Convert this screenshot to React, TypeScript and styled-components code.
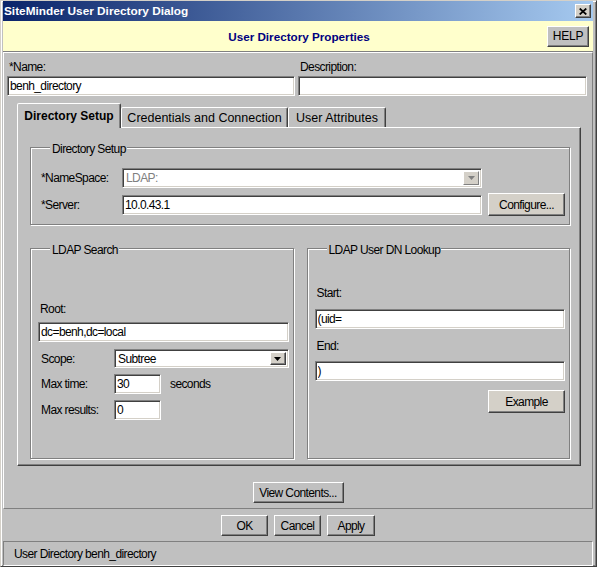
import React from "react";
import styled, { createGlobalStyle, css } from "styled-components";

const Global = createGlobalStyle`
  html, body { margin: 0; padding: 0; background: #c0c0c0; }
  *, *::before, *::after { box-sizing: border-box; }
  body { font-family: "Liberation Sans", Arial, sans-serif; color: #000; }
`;

const narrow = css`
  font-family: "Liberation Sans", Arial, sans-serif;
  font-size: 12px;
  letter-spacing: -0.6px;
  white-space: nowrap;
`;

const sunken = css`
  border: 1px solid;
  border-color: #808080 #fff #fff #808080;
  box-shadow: inset 1px 1px 0 #404040, inset -1px -1px 0 #d4d0c8;
`;

const raised = css`
  border: 1px solid;
  border-color: #fff #404040 #404040 #fff;
  box-shadow: inset -1px -1px 0 #808080;
`;

const Window = styled.div`
  width: 597px;
  height: 567px;
  background: #c0c0c0;
  border: 1px solid;
  border-color: #d4d0c8 #404040 #404040 #d4d0c8;
  box-shadow: inset 1px 1px 0 #fff, inset -1px -1px 0 #808080;
  padding: 0 3px 0 2px;
  display: flex;
  flex-direction: column;
`;

const TitleBar = styled.div`
  flex: none;
  height: 20px;
  display: flex;
  align-items: center;
  justify-content: space-between;
  padding: 0 2px 0 1px;
  background: linear-gradient(90deg, #0a246a 0%, #a6caf0 100%);
`;

const TitleText = styled.span`
  color: #fff;
  font-weight: bold;
  font-size: 11.8px;
`;

const CloseButton = styled.span`
  width: 16px;
  height: 14px;
  background: #d4d0c8;
  ${raised};
  display: flex;
  align-items: center;
  justify-content: center;
`;

const Header = styled.div`
  flex: none;
  height: 31px;
  background: #ffffcc;
  border-bottom: 1px solid #808080;
  display: grid;
  grid-template-columns: 1fr auto 1fr;
  align-items: center;
`;

const HeaderTitle = styled.span`
  color: #000080;
  font-weight: bold;
  font-size: 11.7px;
  padding-left: 2px;
`;

const Button = styled.button<{ $w: number; $h?: number; $light?: boolean }>`
  ${narrow};
  width: ${(p) => p.$w}px;
  height: ${(p) => p.$h ?? 21}px;
  margin: 0;
  padding: 0;
  color: #000;
  background: ${(p) => (p.$light ? "#d4d0c8" : "#c0c0c0")};
  ${raised};
  display: flex;
  align-items: center;
  justify-content: center;
  flex: none;
`;

const HelpButton = styled(Button)`
  font-size: 12px;
  letter-spacing: -0.2px;
  justify-self: end;
  margin-right: 4px;
`;

const MainPanel = styled.div`
  flex: none;
  height: 457px;
  border: 1px solid;
  border-color: #fff #808080 #808080 #fff;
  display: flex;
  flex-direction: column;
  padding: 6px 5px 0 3px;
`;

const NameRow = styled.div`
  display: grid;
  grid-template-columns: 288px 289px;
  column-gap: 3px;
`;

const FieldColumn = styled.div`
  display: flex;
  flex-direction: column;
`;

const FieldLabel = styled.label`
  ${narrow};
  display: block;
  line-height: 16px;
  height: 17px;
  padding-left: 2px;
`;

const TextInput = styled.input<{ $w?: number }>`
  ${narrow};
  display: block;
  width: ${(p) => (p.$w ? `${p.$w}px` : "100%")};
  height: 20px;
  margin: 0;
  padding: 0 2px;
  ${sunken};
  background: #fff;
  color: #000;
  outline: none;
`;

const TabsArea = styled.div`
  margin: 7px 6px 0 10px;
  display: flex;
  flex-direction: column;
`;

const TabStrip = styled.div`
  display: flex;
  align-items: flex-end;
`;

const Tab = styled.div<{ $active?: boolean; $w: number }>`
  position: relative;
  z-index: ${(p) => (p.$active ? 1 : 0)};
  width: ${(p) => p.$w}px;
  height: ${(p) => (p.$active ? 25 : 20)}px;
  margin-bottom: ${(p) => (p.$active ? -1 : 0)}px;
  background: #c0c0c0;
  border: 1px solid;
  border-bottom: none;
  border-color: #fff #404040 transparent #fff;
  border-radius: 2px 2px 0 0;
  box-shadow: inset -1px 0 0 #808080;
  display: flex;
  align-items: center;
  justify-content: center;
  padding-top: ${(p) => (p.$active ? 0 : 1)}px;
  font-size: ${(p) => (p.$active ? 12 : 12.5)}px;
  font-weight: ${(p) => (p.$active ? "bold" : "normal")};
  white-space: nowrap;
`;

const TabPanel = styled.div`
  height: 339px;
  border: 1px solid;
  border-color: #fff #404040 #404040 #fff;
  box-shadow: inset -1px -1px 0 #808080;
  padding: 19px 10px 6px 12px;
  display: flex;
  flex-direction: column;
`;

const Group = styled.div<{ $pad: string }>`
  position: relative;
  border: 1px solid #808080;
  box-shadow: inset 1px 1px 0 #fff, 1px 1px 0 #fff;
  padding: ${(p) => p.$pad};
  display: flex;
  flex-direction: column;
`;

const Legend = styled.span`
  ${narrow};
  position: absolute;
  top: -7px;
  left: 19px;
  line-height: 14px;
  padding: 1px 1px 0 2px;
  background: #c0c0c0;
`;

const SetupGrid = styled.div`
  display: grid;
  grid-template-columns: 81px 360px 83px;
  grid-template-rows: 20px 23px;
  row-gap: 5px;
  align-items: center;
`;

const FormLabel = styled.span<{ $pl?: number; $mt?: number; $mb?: number }>`
  ${narrow};
  display: block;
  line-height: 14px;
  padding-left: ${(p) => p.$pl ?? 0}px;
  margin-top: ${(p) => p.$mt ?? 0}px;
  margin-bottom: ${(p) => p.$mb ?? 0}px;
`;

const Combo = styled.div<{ $disabled?: boolean; $h: number }>`
  ${narrow};
  height: ${(p) => p.$h}px;
  ${sunken};
  background: #fff;
  color: ${(p) => (p.$disabled ? "#808080" : "#000")};
  display: flex;
  align-items: center;
  justify-content: space-between;
  padding: 2px 2px 2px 3px;
`;

const ComboArrow = styled.span<{ $disabled?: boolean }>`
  width: 16px;
  align-self: stretch;
  background: #d4d0c8;
  border: 1px solid;
  border-color: ${(p) =>
    p.$disabled ? "#fff #808080 #808080 #fff" : "#fff #404040 #404040 #fff"};
  box-shadow: ${(p) => (p.$disabled ? "none" : "inset -1px -1px 0 #808080")};
  display: flex;
  align-items: center;
  justify-content: center;
`;

const EndCell = styled.div<{ $mt?: number }>`
  display: flex;
  justify-content: flex-end;
  margin-top: ${(p) => p.$mt ?? 0}px;
`;

const LdapRow = styled.div`
  flex: 1;
  margin-top: 23px;
  display: grid;
  grid-template-columns: 1fr 1fr;
  column-gap: 13px;
`;

const SearchGrid = styled.div`
  margin-top: 7px;
  display: grid;
  grid-template-columns: 76px 1fr;
  grid-template-rows: 19px 20px 20px;
  row-gap: 6px;
  align-items: center;
`;

const InlineRow = styled.div`
  display: flex;
  align-items: center;
  gap: 9px;
`;

const Unit = styled.span`
  ${narrow};
`;

const ViewRow = styled.div`
  margin-top: 16px;
  display: flex;
  justify-content: center;
  padding-left: 2px;
`;

const ActionRow = styled.div`
  flex: none;
  height: 32px;
  padding-top: 6px;
  display: flex;
  justify-content: center;
  align-items: flex-start;
  gap: 6px;
`;

const StatusBar = styled.div`
  ${narrow};
  flex: none;
  height: 25px;
  border: 1px solid;
  border-color: #808080 #fff #fff #808080;
  display: flex;
  align-items: center;
  padding-left: 10px;
`;

const Arrow = ({ color }: { color: string }) => (
  <svg width="7" height="4" viewBox="0 0 7 4">
    <polygon points="0,0 7,0 3.5,4" fill={color} />
  </svg>
);

export default function App() {
  return (
    <>
      <Global />
      <Window>
        <TitleBar>
          <TitleText>SiteMinder User Directory Dialog</TitleText>
          <CloseButton aria-label="Close">
            <svg width="8" height="7" viewBox="0 0 8 7">
              <path d="M0.7 0.5 L7.3 6.5 M7.3 0.5 L0.7 6.5" stroke="#000" strokeWidth="1.7" />
            </svg>
          </CloseButton>
        </TitleBar>

        <Header>
          <span />
          <HeaderTitle>User Directory Properties</HeaderTitle>
          <HelpButton $w={42} $h={21}>HELP</HelpButton>
        </Header>

        <MainPanel>
          <NameRow>
            <FieldColumn>
              <FieldLabel>*Name:</FieldLabel>
              <TextInput value="benh_directory" readOnly />
            </FieldColumn>
            <FieldColumn>
              <FieldLabel>Description:</FieldLabel>
              <TextInput value="" readOnly />
            </FieldColumn>
          </NameRow>

          <TabsArea>
            <TabStrip>
              <Tab $active $w={104}>Directory Setup</Tab>
              <Tab $w={167}>Credentials and Connection</Tab>
              <Tab $w={98}>User Attributes</Tab>
            </TabStrip>
            <TabPanel>
              <Group $pad="20px 4px 8px 10px">
                <Legend>Directory Setup</Legend>
                <SetupGrid>
                  <FormLabel>*NameSpace:</FormLabel>
                  <Combo $disabled $h={20}>
                    LDAP:
                    <ComboArrow $disabled>
                      <Arrow color="#808080" />
                    </ComboArrow>
                  </Combo>
                  <span />
                  <FormLabel>*Server:</FormLabel>
                  <TextInput value="10.0.43.1" readOnly />
                  <EndCell>
                    <Button $w={77} $h={23} $light>Configure...</Button>
                  </EndCell>
                </SetupGrid>
              </Group>

              <LdapRow>
                <Group $pad="53px 4px 0 7px">
                  <Legend>LDAP Search</Legend>
                  <FormLabel $pl={2} $mb={6}>Root:</FormLabel>
                  <TextInput value="dc=benh,dc=local" readOnly />
                  <SearchGrid>
                    <FormLabel $pl={3}>Scope:</FormLabel>
                    <Combo $h={19}>
                      Subtree
                      <ComboArrow>
                        <Arrow color="#000" />
                      </ComboArrow>
                    </Combo>
                    <FormLabel $pl={3}>Max time:</FormLabel>
                    <InlineRow>
                      <TextInput $w={47} value="30" readOnly />
                      <Unit>seconds</Unit>
                    </InlineRow>
                    <FormLabel $pl={3}>Max results:</FormLabel>
                    <TextInput $w={47} value="0" readOnly />
                  </SearchGrid>
                </Group>

                <Group $pad="37px 4px 0 7px">
                  <Legend>LDAP User DN Lookup</Legend>
                  <FormLabel $pl={2} $mb={9}>Start:</FormLabel>
                  <TextInput value="(uid=" readOnly />
                  <FormLabel $pl={2} $mt={10} $mb={8}>End:</FormLabel>
                  <TextInput value=")" readOnly />
                  <EndCell $mt={9}>
                    <Button $w={77} $h={23} $light>Example</Button>
                  </EndCell>
                </Group>
              </LdapRow>
            </TabPanel>
          </TabsArea>

          <ViewRow>
            <Button $w={91} $h={21}>View Contents...</Button>
          </ViewRow>
        </MainPanel>

        <ActionRow>
          <Button $w={47}>OK</Button>
          <Button $w={47}>Cancel</Button>
          <Button $w={48}>Apply</Button>
        </ActionRow>

        <StatusBar>User Directory benh_directory</StatusBar>
      </Window>
    </>
  );
}
